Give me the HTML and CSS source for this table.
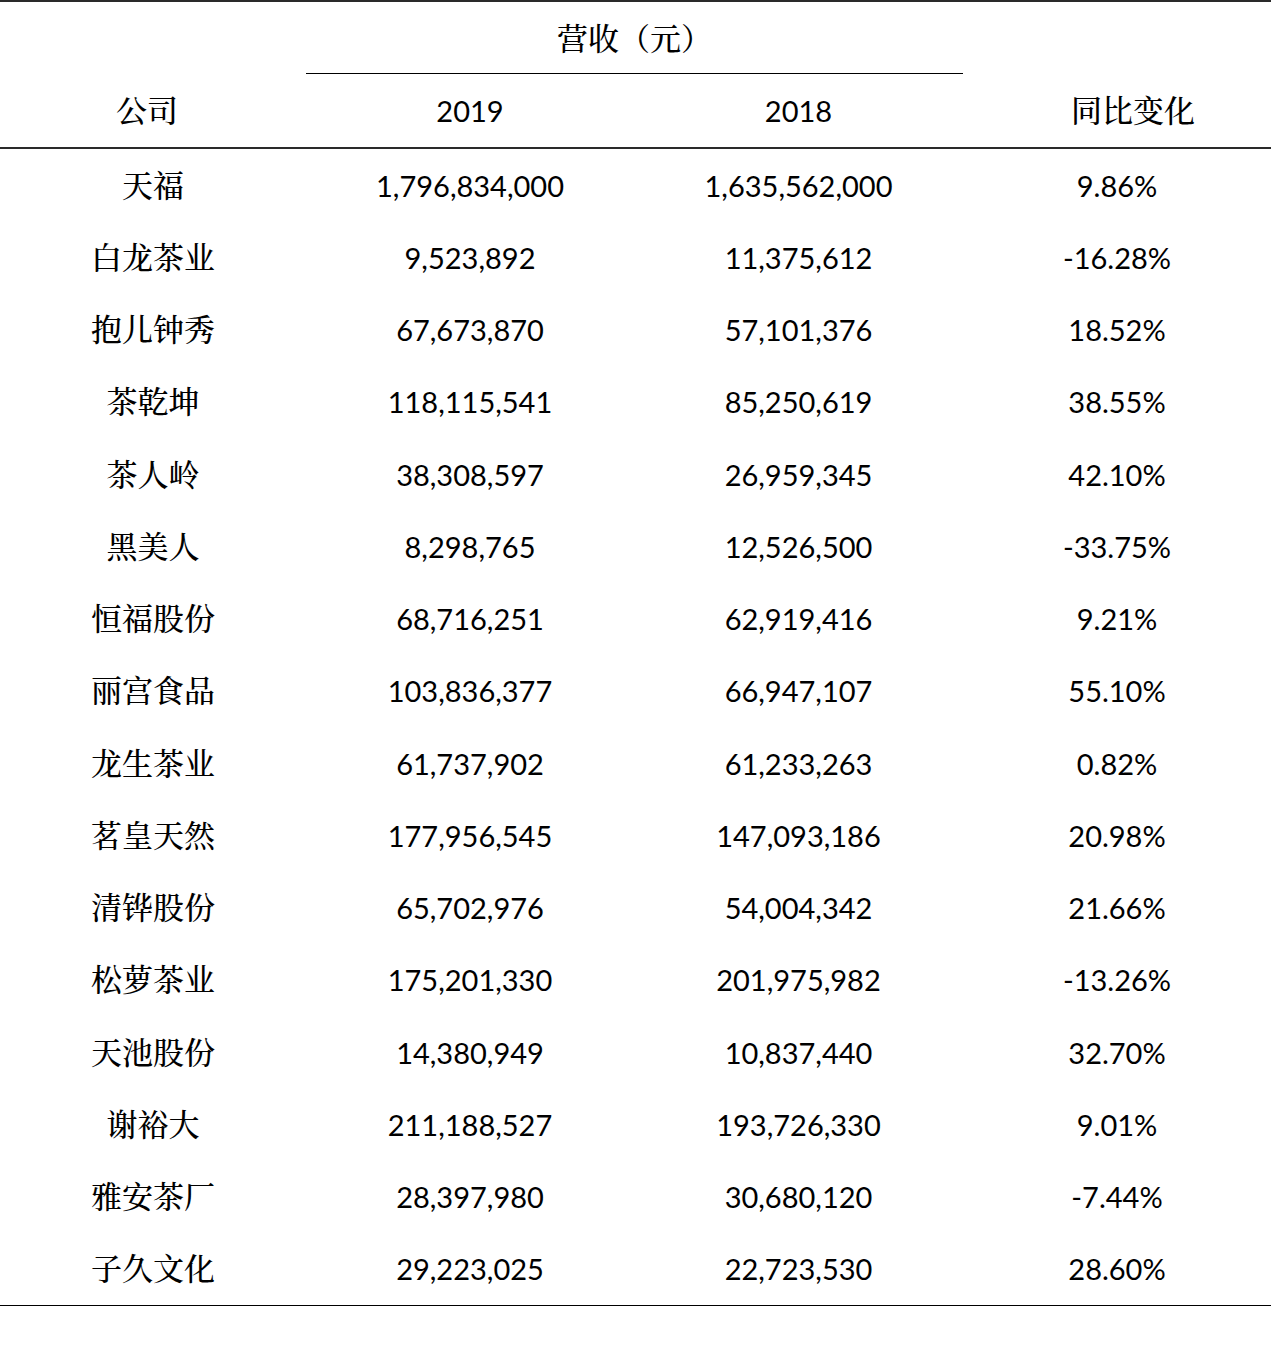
FILE: index.html
```html
<!DOCTYPE html>
<html lang="zh-CN">
<head>
<meta charset="utf-8">
<title>营收对比</title>
<link rel="stylesheet" href="styles.css">
</head>
<body>
<div class="sheet">
  <div class="head-top">
    <div></div>
    <div class="group cjk">营收（元）</div>
    <div></div>
  </div>
  <div class="head-cols">
    <div class="cell cjk h-company">公司</div>
    <div class="cell num">2019</div>
    <div class="cell num">2018</div>
    <div class="cell cjk h-change">同比变化</div>
  </div>
  <div class="body">
    <div class="row"><div class="cell cjk">天福</div><div class="cell num">1,796,834,000</div><div class="cell num">1,635,562,000</div><div class="cell num">9.86%</div></div>
    <div class="row"><div class="cell cjk">白龙茶业</div><div class="cell num">9,523,892</div><div class="cell num">11,375,612</div><div class="cell num">-16.28%</div></div>
    <div class="row"><div class="cell cjk">抱儿钟秀</div><div class="cell num">67,673,870</div><div class="cell num">57,101,376</div><div class="cell num">18.52%</div></div>
    <div class="row"><div class="cell cjk">茶乾坤</div><div class="cell num">118,115,541</div><div class="cell num">85,250,619</div><div class="cell num">38.55%</div></div>
    <div class="row"><div class="cell cjk">茶人岭</div><div class="cell num">38,308,597</div><div class="cell num">26,959,345</div><div class="cell num">42.10%</div></div>
    <div class="row"><div class="cell cjk">黑美人</div><div class="cell num">8,298,765</div><div class="cell num">12,526,500</div><div class="cell num">-33.75%</div></div>
    <div class="row"><div class="cell cjk">恒福股份</div><div class="cell num">68,716,251</div><div class="cell num">62,919,416</div><div class="cell num">9.21%</div></div>
    <div class="row"><div class="cell cjk">丽宫食品</div><div class="cell num">103,836,377</div><div class="cell num">66,947,107</div><div class="cell num">55.10%</div></div>
    <div class="row"><div class="cell cjk">龙生茶业</div><div class="cell num">61,737,902</div><div class="cell num">61,233,263</div><div class="cell num">0.82%</div></div>
    <div class="row"><div class="cell cjk">茗皇天然</div><div class="cell num">177,956,545</div><div class="cell num">147,093,186</div><div class="cell num">20.98%</div></div>
    <div class="row"><div class="cell cjk">清铧股份</div><div class="cell num">65,702,976</div><div class="cell num">54,004,342</div><div class="cell num">21.66%</div></div>
    <div class="row"><div class="cell cjk">松萝茶业</div><div class="cell num">175,201,330</div><div class="cell num">201,975,982</div><div class="cell num">-13.26%</div></div>
    <div class="row"><div class="cell cjk">天池股份</div><div class="cell num">14,380,949</div><div class="cell num">10,837,440</div><div class="cell num">32.70%</div></div>
    <div class="row"><div class="cell cjk">谢裕大</div><div class="cell num">211,188,527</div><div class="cell num">193,726,330</div><div class="cell num">9.01%</div></div>
    <div class="row"><div class="cell cjk">雅安茶厂</div><div class="cell num">28,397,980</div><div class="cell num">30,680,120</div><div class="cell num">-7.44%</div></div>
    <div class="row"><div class="cell cjk">子久文化</div><div class="cell num">29,223,025</div><div class="cell num">22,723,530</div><div class="cell num">28.60%</div></div>
  </div>
</div>
</body>
</html>
```
FILE: styles.css
```css
html, body {
  margin: 0;
  padding: 0;
  background: #ffffff;
  color: #000000;
}

.sheet {
  width: 1271px;
  border-top: 2px solid #2a2a2a;
  border-bottom: 1px solid #000000;
}

.cjk {
  font-family: "Noto Serif CJK SC", "Noto Sans CJK SC", serif;
  font-size: 31px;
  font-weight: 500;
}

.num {
  font-family: Lato, "Open Sans", sans-serif;
  font-size: 29px;
}

.head-top {
  display: grid;
  grid-template-columns: 306px 657px 308px;
  height: 72px;
}

.group {
  display: flex;
  align-items: center;
  justify-content: center;
  border-bottom: 1px solid #000000;
  padding-bottom: 3px;
}

.head-cols,
.row {
  display: grid;
  grid-template-columns: 306px 328px 329px 308px;
}

.head-cols {
  height: 73px;
  border-bottom: 2px solid #2a2a2a;
}

.row {
  height: 72.25px;
}

.cell {
  display: flex;
  align-items: center;
  justify-content: center;
  white-space: nowrap;
}

.cell.cjk {
  padding-bottom: 4px;
}

.h-company {
  padding-right: 12px;
}

.h-change {
  padding-left: 32px;
}
```
